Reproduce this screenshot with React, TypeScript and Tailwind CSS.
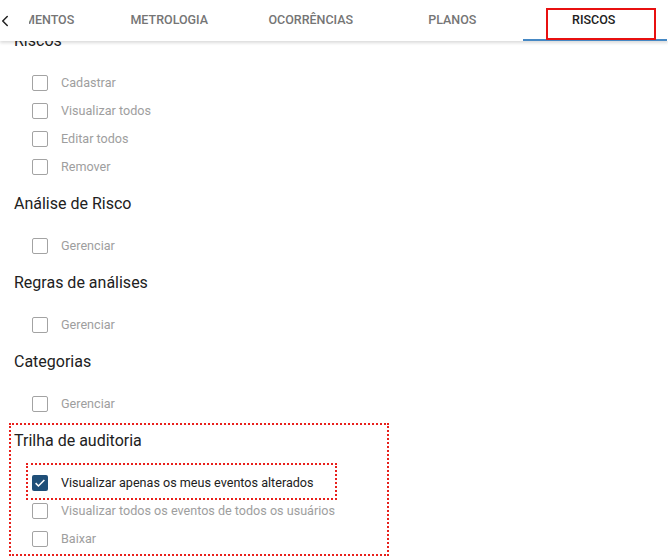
import { ChevronLeft } from 'lucide-react';

const tabs = ['EQUIPAMENTOS', 'METROLOGIA', 'OCORRÊNCIAS', 'PLANOS', 'RISCOS'];

type Item = { label: string; checked?: boolean; marked?: boolean };
type Section = { title: string; items: Item[]; marked?: boolean };

const sections: Section[] = [
  {
    title: 'Riscos',
    items: [
      { label: 'Cadastrar' },
      { label: 'Visualizar todos' },
      { label: 'Editar todos' },
      { label: 'Remover' },
    ],
  },
  { title: 'Análise de Risco', items: [{ label: 'Gerenciar' }] },
  { title: 'Regras de análises', items: [{ label: 'Gerenciar' }] },
  { title: 'Categorias', items: [{ label: 'Gerenciar' }] },
  {
    title: 'Trilha de auditoria',
    marked: true,
    items: [
      { label: 'Visualizar apenas os meus eventos alterados', checked: true, marked: true },
      { label: 'Visualizar todos os eventos de todos os usuários' },
      { label: 'Baixar' },
    ],
  },
];

function Checkbox({ checked }: { checked?: boolean }) {
  if (checked) {
    return (
      <span className="flex h-4 w-4 shrink-0 items-center justify-center rounded-[2px] bg-[#1f4f78]">
        <svg viewBox="0 0 16 16" className="h-3.5 w-3.5" fill="none">
          <path d="M3 8.2l3.2 3.2L13 4.6" stroke="#fff" strokeWidth="1.8" />
        </svg>
      </span>
    );
  }
  return <span className="h-4 w-4 shrink-0 rounded-[2px] border-[1.5px] border-[#a3a3a3]" />;
}

function Row({ item, inset }: { item: Item; inset?: boolean }) {
  return (
    <div className={`flex h-7 items-center gap-[13px] ${inset ? 'pl-[4px]' : 'pl-[18px]'}`}>
      <Checkbox checked={item.checked} />
      <span
        className={`whitespace-nowrap text-[12.6px] ${item.checked ? 'text-[#212121]' : 'text-[#9e9e9e]'}`}
      >
        {item.label}
      </span>
    </div>
  );
}

function Block({ section }: { section: Section }) {
  return (
    <div>
      <h3
        className={`h-7 text-[16px] leading-[30px] text-[#212121] ${section.marked ? 'mb-[9px]' : 'mb-[15px]'}`}
      >
        {section.title}
      </h3>
      {section.items.map((item) =>
        item.marked ? (
          <div
            key={item.label}
            className="mb-[-3px] ml-[12px] w-[311px] border-2 border-dotted border-[#e8201c] pt-[4px] pb-px"
          >
            <Row item={item} inset />
          </div>
        ) : (
          <Row key={item.label} item={item} />
        )
      )}
    </div>
  );
}

export default function App() {
  return (
    <div className="h-[559px] w-[668px] overflow-hidden bg-white font-['Roboto',sans-serif]">
      {/* Tabs header */}
      <div className="relative z-10 flex h-[41px] items-stretch bg-white shadow-[0_2px_3px_rgba(0,0,0,0.14)]">
        <div className="flex w-[29px] shrink-0 items-center">
          <ChevronLeft className="-ml-[4px] h-[18px] w-[18px] text-[#212121]" strokeWidth={2} />
        </div>
        <div className="flex-1 overflow-hidden">
          <div className="-ml-[72px] flex h-full">
            {tabs.map((t) => {
              const active = t === 'RISCOS';
              return (
                <div
                  key={t}
                  className={`relative flex h-full w-[141.5px] shrink-0 items-center justify-center text-[12.5px] font-medium ${
                    active ? 'text-[#212121]' : 'text-[#757575]'
                  }`}
                >
                  {t}
                  {active && (
                    <>
                      <span className="absolute bottom-0 left-0 h-[2px] w-[144px] bg-[#4688c4]" />
                      <span className="absolute left-[23px] top-[8px] h-[32px] w-[110px] border-2 border-[#e81010]" />
                    </>
                  )}
                </div>
              );
            })}
          </div>
        </div>
      </div>

      {/* Permissions list */}
      <div className="-mt-[15px] flex flex-col gap-2 pl-[14px]">
        {sections.map((s) =>
          s.marked ? (
            <div
              key={s.title}
              className="-ml-[5px] -mt-[3px] w-[380px] border-2 border-dotted border-[#e8201c] pl-[3px] pt-px pb-[1px]"
            >
              <Block section={s} />
            </div>
          ) : (
            <Block key={s.title} section={s} />
          )
        )}
      </div>
    </div>
  );
}
